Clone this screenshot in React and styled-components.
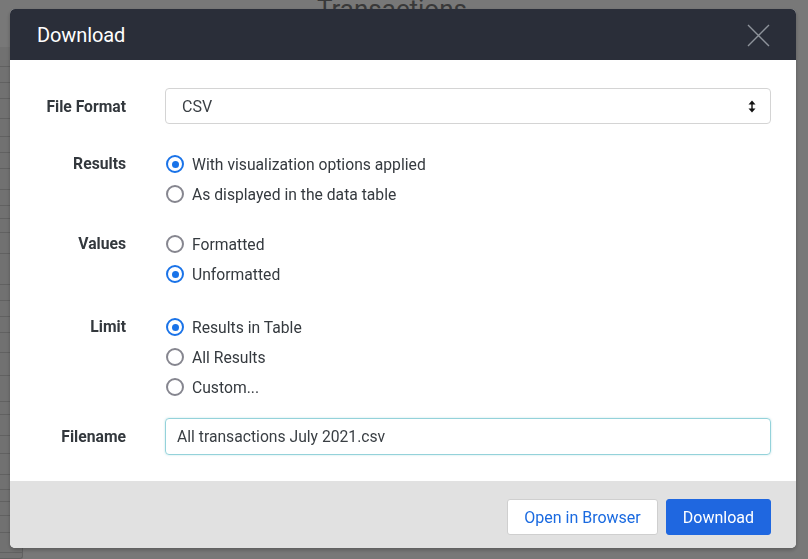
import React from "react";
import styled, { createGlobalStyle } from "styled-components";

const GlobalStyle = createGlobalStyle`
  html, body { margin: 0; padding: 0; }
  body {
    background: #ffffff;
    font-family: Roboto, "Liberation Sans", Arial, sans-serif;
    overflow: hidden;
  }
  * { box-sizing: border-box; }
`;

const Page = styled.div`
  height: 100vh;
  display: flex;
  flex-direction: column;
  background: #ffffff;
`;

const PageHeader = styled.header`
  height: 40px;
  padding-left: 317px;
`;

const PageTitle = styled.h1`
  margin: -6px 0 0;
  font-size: 26px;
  line-height: 30px;
  font-weight: 400;
  color: #7a7a7a;
`;

const PageBody = styled.div`
  display: flex;
  flex: 1;
`;

const SideTable = styled.div`
  width: 23px;
  height: 512px;
  margin-top: 17px;
  background: #f1f1f1;
  border-right: 1px solid #cfcfcf;
  border-bottom: 1px solid #cfcfcf;
  border-bottom-right-radius: 3px;
  display: flex;
  flex-direction: column;
  overflow: hidden;
`;

const TableRow = styled.div`
  height: ${(p) => p.$h}px;
  flex: none;
  border-bottom: 1px solid #cfcfcf;
`;

const Overlay = styled.div`
  position: fixed;
  inset: 0;
  background: rgba(0, 0, 0, 0.53);
  padding: 9px 12px 11px 10px;
  display: flex;
`;

const Modal = styled.div`
  flex: 1;
  display: flex;
  flex-direction: column;
  background: #ffffff;
  border-radius: 5px;
  overflow: hidden;
  box-shadow: 0 2px 4px rgba(0, 0, 0, 0.25);
`;

const ModalHeader = styled.div`
  height: 51px;
  flex: none;
  background: #2a2e39;
  display: flex;
  align-items: center;
  justify-content: space-between;
  padding: 0 26px 0 27px;
`;

const ModalTitle = styled.h2`
  margin: 0;
  font-size: 20px;
  font-weight: 400;
  color: #ffffff;
  letter-spacing: -0.1px;
`;

const CloseButton = styled.button`
  width: 23px;
  height: 23px;
  padding: 0;
  border: none;
  background: transparent;
  display: flex;
  align-items: center;
  justify-content: center;
  margin-top: 1px;
`;

const ModalBody = styled.div`
  flex: 1;
  display: flex;
  flex-direction: column;
  padding: 28px 25px 0 0;
`;

const Field = styled.div`
  display: grid;
  grid-template-columns: 116px 1fr;
  column-gap: 39px;
  margin-top: ${(p) => p.$mt || 0}px;
`;

const Label = styled.div`
  text-align: right;
  font-size: 15.7px;
  font-weight: 700;
  color: #33383d;
  line-height: ${(p) => p.$lh}px;
`;

const SelectBox = styled.div`
  height: 36px;
  border: 1px solid #d4d4d4;
  border-radius: 4px;
  display: flex;
  align-items: center;
  justify-content: space-between;
  padding: 0 14px 0 16px;
  font-size: 16px;
  color: #3a3f44;
`;

const Options = styled.div`
  display: flex;
  flex-direction: column;
`;

const Option = styled.label`
  height: 30px;
  display: flex;
  align-items: center;
  gap: 8px;
  font-size: 15.7px;
  color: #353a3f;
`;

const RadioCircle = styled.span`
  width: 18px;
  height: 18px;
  flex: none;
  border-radius: 50%;
  margin-left: 1px;
  border: ${(p) => (p.$checked ? "2.5px solid #1a73e8" : "2px solid #86868f")};
  display: flex;
  align-items: center;
  justify-content: center;
  &::after {
    content: "";
    width: 7px;
    height: 7px;
    border-radius: 50%;
    background: ${(p) => (p.$checked ? "#1a73e8" : "transparent")};
  }
`;

const TextInput = styled.div`
  height: 37px;
  border: 1px solid #94d2da;
  border-radius: 4px;
  box-shadow: 0 0 2px rgba(120, 200, 210, 0.5);
  display: flex;
  align-items: center;
  padding: 0 11px;
  font-size: 15.7px;
  color: #3a3f44;
`;

const ModalFooter = styled.div`
  height: 67px;
  flex: none;
  background: #e1e1e1;
  display: flex;
  justify-content: flex-end;
  align-items: flex-start;
  gap: 8px;
  padding: 18px 25px 0 0;
`;

const Button = styled.button`
  height: 36px;
  padding: 0 16px;
  border-radius: 3px;
  font-family: inherit;
  font-size: 16px;
  border: 1px solid ${(p) => (p.$primary ? "#1f67e0" : "#cfcfcf")};
  background: ${(p) => (p.$primary ? "#1f67e0" : "#ffffff")};
  color: ${(p) => (p.$primary ? "#ffffff" : "#1a6ae0")};
`;

const rows = [20, 16, 16, 20, 18, 16, 16, 21, 16, 13, 14, 21, 31, 16, 16, 16, 20, 23, 26, 13, 21, 18, 21, 15, 12, 14, 17, 20];

function Radio({ checked, children }) {
  return (
    <Option>
      <RadioCircle $checked={checked} />
      {children}
    </Option>
  );
}

export default function App() {
  return (
    <>
      <GlobalStyle />
      <Page>
        <PageHeader>
          <PageTitle>Transactions</PageTitle>
        </PageHeader>
        <PageBody>
          <SideTable>
            {rows.map((h, i) => (
              <TableRow key={i} $h={h} />
            ))}
          </SideTable>
        </PageBody>
      </Page>
      <Overlay>
        <Modal>
          <ModalHeader>
            <ModalTitle>Download</ModalTitle>
            <CloseButton aria-label="Close">
              <svg width="23" height="23" viewBox="0 0 23 23">
                <path d="M1 1 L22 22 M22 1 L1 22" stroke="#8e939b" strokeWidth="1.4" fill="none" />
              </svg>
            </CloseButton>
          </ModalHeader>
          <ModalBody>
            <Field>
              <Label $lh={37}>File Format</Label>
              <SelectBox>
                <span>CSV</span>
                <svg width="8" height="13" viewBox="0 0 8 13">
                  <path d="M4 0.5 L7.5 4.5 L0.5 4.5 Z M4 12.5 L7.5 8.5 L0.5 8.5 Z" fill="#111" />
                  <rect x="3.3" y="4" width="1.4" height="5" fill="#111" />
                </svg>
              </SelectBox>
            </Field>
            <Field $mt={24}>
              <Label $lh={30}>Results</Label>
              <Options>
                <Radio checked>With visualization options applied</Radio>
                <Radio>As displayed in the data table</Radio>
              </Options>
            </Field>
            <Field $mt={20}>
              <Label $lh={30}>Values</Label>
              <Options>
                <Radio>Formatted</Radio>
                <Radio checked>Unformatted</Radio>
              </Options>
            </Field>
            <Field $mt={23}>
              <Label $lh={30}>Limit</Label>
              <Options>
                <Radio checked>Results in Table</Radio>
                <Radio>All Results</Radio>
                <Radio>Custom...</Radio>
              </Options>
            </Field>
            <Field $mt={16}>
              <Label $lh={37}>Filename</Label>
              <TextInput>All transactions July 2021.csv</TextInput>
            </Field>
          </ModalBody>
          <ModalFooter>
            <Button>Open in Browser</Button>
            <Button $primary>Download</Button>
          </ModalFooter>
        </Modal>
      </Overlay>
    </>
  );
}
